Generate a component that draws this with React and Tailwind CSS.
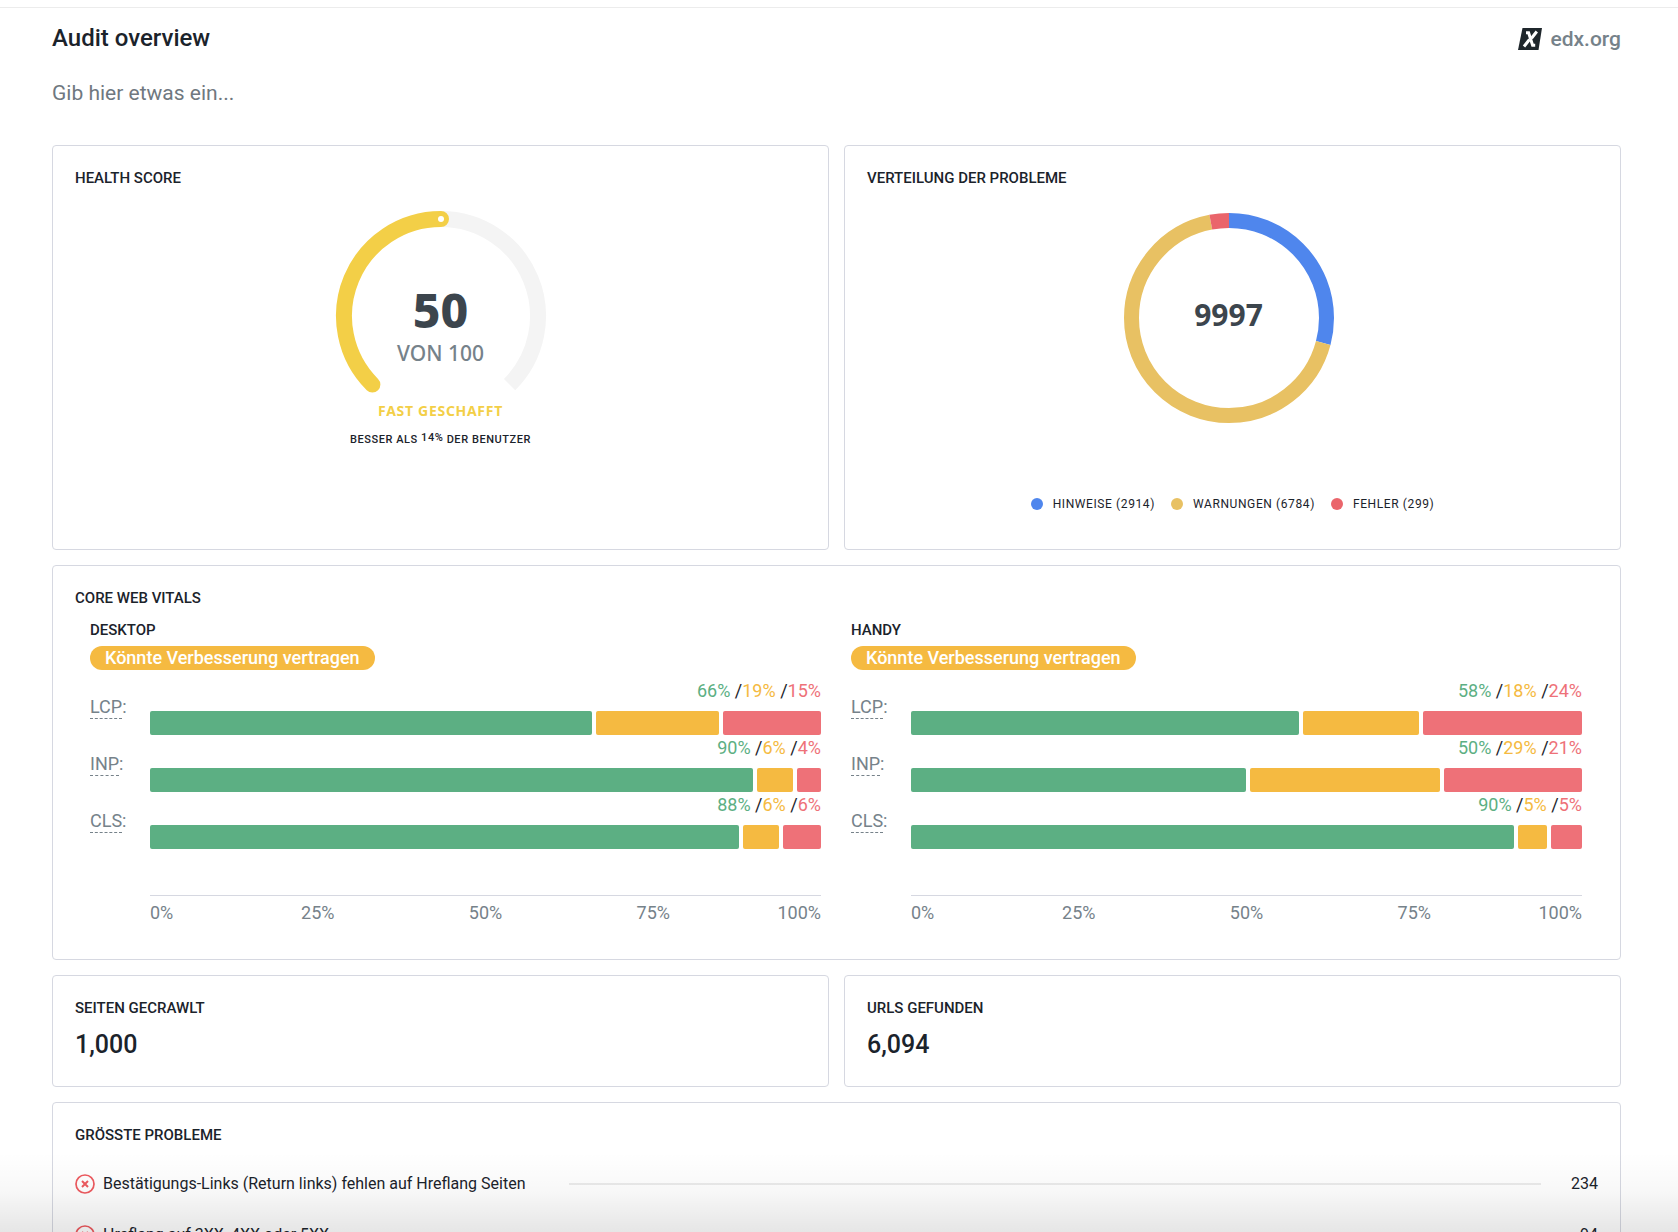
import { useId } from 'react';

const VITALS = [
  {
    device: 'DESKTOP',
    verdict: 'Könnte Verbesserung vertragen',
    metrics: [
      { name: 'LCP', title: 'Largest Contentful Paint', values: [66, 19, 15], grow: [441, 123, 98] },
      { name: 'INP', title: 'Interaction to Next Paint', values: [90, 6, 4], grow: [602, 36, 24] },
      { name: 'CLS', title: 'Cumulative Layout Shift', values: [88, 6, 6], grow: [588, 36, 38] },
    ],
  },
  {
    device: 'HANDY',
    verdict: 'Könnte Verbesserung vertragen',
    metrics: [
      { name: 'LCP', title: 'Largest Contentful Paint', values: [58, 18, 24], grow: [387, 116, 159] },
      { name: 'INP', title: 'Interaction to Next Paint', values: [50, 29, 21], grow: [334, 190, 138] },
      { name: 'CLS', title: 'Cumulative Layout Shift', values: [90, 5, 5], grow: [602, 29, 31] },
    ],
  },
];

const ISSUES = [
  { label: 'Hinweise', count: 2914, color: '#4f86ed', dot: 'bg-[#4f86ed]' },
  { label: 'Warnungen', count: 6784, color: '#e8c163', dot: 'bg-[#e8c163]' },
  { label: 'Fehler', count: 299, color: '#ea656b', dot: 'bg-[#ea656b]' },
];

const TOP_PROBLEMS = [
  { text: 'Bestätigungs-Links (Return links) fehlen auf Hreflang Seiten', count: 234 },
  { text: 'Hreflang auf 3XX, 4XX oder 5XX', count: 94 },
];

function Card({ title, className = '', children }) {
  const id = useId();
  return (
    <section aria-labelledby={id} className={`rounded-[4px] border border-[#d6d8e1] px-[22px] pt-5 ${className}`}>
      <h2 id={id} className="text-[15px] leading-6 font-medium uppercase">{title}</h2>
      {children}
    </section>
  );
}

function HealthGauge() {
  return (
    <div className="flex flex-col items-center pt-5">
      <div className="relative">
        <svg width="212" height="184" viewBox="0 0 212 184" fill="none" strokeWidth="16">
          <path d="M106 9 A97 97 0 0 1 174.6 174.6" stroke="#f4f4f4" />
          <path d="M37.4 174.6 A97 97 0 0 1 106 9" stroke="#f3cf47" strokeLinecap="round" />
          <circle cx="106" cy="9" r="3" fill="#fff" />
        </svg>
        <div className="absolute inset-x-0 top-[72px] text-center font-['Noto_Sans',sans-serif]">
          <p className="text-[48px] leading-[56px] font-extrabold text-[#3c454d]">50</p>
          <p className="text-[21px] leading-[30px] font-medium text-[#76828a]">VON 100</p>
        </div>
      </div>
      <p className="mt-[7px] font-['Noto_Sans',sans-serif] text-sm leading-5 font-bold tracking-wider text-[#f3cf47] uppercase">
        Fast geschafft
      </p>
      <p className="mt-[9px] text-[11px] leading-5 font-medium tracking-wider uppercase">
        Besser als <span className="relative -top-0.5">14%</span> der Benutzer
      </p>
    </div>
  );
}

function IssueDonut() {
  const total = ISSUES.reduce((sum, i) => sum + i.count, 0);
  let used = 0;
  return (
    <div className="flex flex-col items-center pt-[23px]">
      <div className="relative mr-2">
        <svg width="210" height="210" viewBox="0 0 210 210" fill="none" strokeWidth="15">
          <g transform="rotate(-90 105 105)">
            {ISSUES.map((issue) => {
              const share = (issue.count / total) * 100;
              const offset = -used;
              used += share;
              return (
                <circle
                  key={issue.label}
                  cx="105"
                  cy="105"
                  r="97.5"
                  pathLength="100"
                  stroke={issue.color}
                  strokeDasharray={`${share} ${100 - share}`}
                  strokeDashoffset={offset}
                />
              );
            })}
          </g>
        </svg>
        <p className="absolute inset-0 flex items-center justify-center pb-1.5 font-['Noto_Sans',sans-serif] text-[30px] leading-10 font-bold text-[#3c454d]">
          {total}
        </p>
      </div>
      <ul className="mt-[71px] flex gap-4 text-xs leading-5 tracking-wider uppercase">
        {ISSUES.map((issue) => (
          <li key={issue.label} className="flex items-center gap-2.5">
            <span className={`size-3 rounded-full ${issue.dot}`} />
            {issue.label} ({issue.count})
          </li>
        ))}
      </ul>
    </div>
  );
}

function MetricRow({ name, title, values, grow }) {
  const [good, medium, poor] = values;
  return (
    <div className="flex h-[57px]">
      <div className="w-15 shrink-0 pt-[17px] text-lg leading-6 text-[#76828a]">
        <abbr title={title} className="inline-block border-b border-dashed border-[#76828a] leading-[22px] no-underline">{name}</abbr>:
      </div>
      <div className="min-w-0 flex-1">
        <p className="h-[33px] text-right text-lg leading-[26px]">
          <span className="text-[#5caf83]">{good}%</span> /
          <span className="text-[#f5ba41]">{medium}%</span> /
          <span className="text-[#ee7178]">{poor}%</span>
        </p>
        <div className="flex h-6 gap-1">
          <div className="rounded-[2px] bg-[#5caf83]" style={{ flex: `${grow[0]} 0 0` }} />
          <div className="rounded-[2px] bg-[#f5ba41]" style={{ flex: `${grow[1]} 0 0` }} />
          <div className="rounded-[2px] bg-[#ee7178]" style={{ flex: `${grow[2]} 0 0` }} />
        </div>
      </div>
    </div>
  );
}

function VitalsColumn({ device, verdict, metrics }) {
  return (
    <div className="px-[15px]">
      <h3 className="text-[15px] leading-6 font-medium">{device}</h3>
      <p className="mt-1 w-fit rounded-full bg-[#f5ba41] px-[15px] text-lg leading-6 font-medium text-white">{verdict}</p>
      <div className="mt-2">
        {metrics.map((m) => (
          <MetricRow key={m.name} {...m} />
        ))}
      </div>
      <div className="mt-[46px] ml-15 grid grid-cols-[1fr_2fr_2fr_2fr_1fr] border-t border-[#d6d8e1] pt-[5px] text-center text-lg leading-6 text-[#76828a]">
        <span className="text-left">0%</span>
        <span>25%</span>
        <span>50%</span>
        <span>75%</span>
        <span className="text-right">100%</span>
      </div>
    </div>
  );
}

function ErrorIcon() {
  return (
    <svg width="20" height="20" viewBox="0 0 20 20" fill="none" stroke="#ee5a5f" className="shrink-0">
      <circle cx="10" cy="10" r="9" strokeWidth="1.7" />
      <path d="M7 7l6 6M13 7l-6 6" strokeWidth="2" />
    </svg>
  );
}

export default function App() {
  return (
    <div className="relative h-screen overflow-hidden bg-white pt-[7px] font-[Roboto,sans-serif] text-[#1b232b]">
      <div className="border-t border-[#ececec] pr-[57px] pl-[52px]">
        <header className="flex items-center justify-between pt-3.5">
          <h1 className="text-2xl leading-8 font-medium">Audit overview</h1>
          <a href="https://edx.org" className="flex items-center gap-2 pt-0.5 text-[21px] leading-[30px] font-medium text-[#76828a]">
            <svg width="24" height="22" viewBox="0 0 24 22" fill="none" stroke="#fff">
              <path d="M4.5 0H24L20.5 22H0Z" fill="#1f272c" stroke="none" />
              <path d="M8 4.8h2.6l4 12.4h2.6" strokeWidth="3" />
              <path d="M18.8 3.5L13.5 10.2M11.5 11.5L6 18.5" strokeWidth="3" />
            </svg>
            edx.org
          </a>
        </header>

        <input
          type="text"
          aria-label="Beschreibung"
          placeholder="Gib hier etwas ein..."
          className="mt-[19px] block h-10 w-full text-[21px] outline-none placeholder:text-[#6f7880]"
        />

        <main className="mt-8 flex flex-col gap-[15px]">
          <div className="grid grid-cols-2 gap-[15px]">
            <Card title="Health Score" className="h-[405px]">
              <HealthGauge />
            </Card>
            <Card title="Verteilung der Probleme" className="h-[405px]">
              <IssueDonut />
            </Card>
          </div>

          <Card title="Core Web Vitals" className="pb-[34px]">
            <div className="mt-2 grid grid-cols-2 pr-px">
              {VITALS.map((v) => (
                <VitalsColumn key={v.device} {...v} />
              ))}
            </div>
          </Card>

          <div className="grid grid-cols-2 gap-[15px]">
            <Card title="Seiten gecrawlt" className="pb-[25px]">
              <p className="mt-[9px] text-[25px] leading-8 font-medium">1,000</p>
            </Card>
            <Card title="URLs gefunden" className="pb-[25px]">
              <p className="mt-[9px] text-[25px] leading-8 font-medium">6,094</p>
            </Card>
          </div>

          <Card title="Grösste Probleme" className="pb-6">
            <ul className="mt-[11px]">
              {TOP_PROBLEMS.map((p) => (
                <li key={p.text} className="flex h-[51px] items-center text-base leading-6">
                  <ErrorIcon />
                  <span className="ml-2">{p.text}</span>
                  <span className="mr-[30px] ml-11 h-0.5 flex-1 bg-[#ebebeb]" />
                  <span>{p.count}</span>
                </li>
              ))}
            </ul>
          </Card>
        </main>
      </div>

      {/* fade at the lower edge */}
      <div className="pointer-events-none absolute inset-x-0 bottom-0 h-20 bg-linear-to-b from-black/0 via-black/3 to-black/10" />
    </div>
  );
}
